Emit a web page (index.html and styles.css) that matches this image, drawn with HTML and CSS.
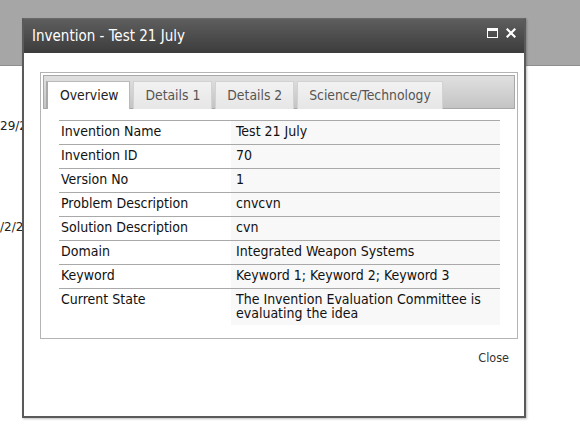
FILE: index.html
```html
<!DOCTYPE html>
<html>
<head>
<meta charset="utf-8">
<link rel="stylesheet" href="styles.css">
</head>
<body>
<div class="page">
  <div class="band"></div>
  <div class="bg-content">
    <div class="bg-date d1">29/2</div>
    <div class="bg-date d2">/2/2</div>
  </div>
  <div class="dialog">
    <div class="titlebar">
      <span class="title">Invention - Test 21 July</span>
      <span class="tools">
        <svg width="11" height="10" viewBox="0 0 11 10"><rect x="0.5" y="0.5" width="10" height="9" fill="none" stroke="#fff" stroke-width="1"/><rect x="1" y="1" width="9" height="2" fill="#fff"/></svg>
        <svg width="10" height="10" viewBox="0 0 10 10"><path d="M1.5 1.5 L8.5 8.5 M8.5 1.5 L1.5 8.5" stroke="#fff" stroke-width="2.2" stroke-linecap="square"/></svg>
      </span>
    </div>
    <div class="body">
      <div class="tabbox">
        <div class="tabstrip">
          <div class="tab active">Overview</div>
          <div class="tab">Details 1</div>
          <div class="tab">Details 2</div>
          <div class="tab">Science/Technology</div>
        </div>
        <table class="info">
          <tr><td class="lbl">Invention Name</td><td class="val">Test 21 July</td></tr>
          <tr><td class="lbl">Invention ID</td><td class="val">70</td></tr>
          <tr><td class="lbl">Version No</td><td class="val">1</td></tr>
          <tr><td class="lbl">Problem Description</td><td class="val">cnvcvn</td></tr>
          <tr><td class="lbl">Solution Description</td><td class="val">cvn</td></tr>
          <tr><td class="lbl">Domain</td><td class="val">Integrated Weapon Systems</td></tr>
          <tr><td class="lbl">Keyword</td><td class="val">Keyword 1; Keyword 2; Keyword 3</td></tr>
          <tr class="last"><td class="lbl">Current State</td><td class="val">The Invention Evaluation Committee is evaluating the idea</td></tr>
        </table>
      </div>
      <div class="footer"><a class="close">Close</a></div>
    </div>
  </div>
</div>
</body>
</html>
```
FILE: styles.css
```css
html, body { margin: 0; padding: 0; }
body {
  width: 580px; height: 447px; overflow: hidden;
  background: #fff;
  font-family: "DejaVu Sans", Verdana, sans-serif;
}
.page { position: relative; width: 580px; height: 447px; }
.band {
  height: 65px;
  background: #a6a6a6;
  border-bottom: 1px solid #8e8e8e;
}
.bg-content { position: relative; font-size: 12px; color: #222; }
.bg-date { position: absolute; left: 0; }
.d1 { top: 53px; }
.d2 { top: 154px; }
.dialog {
  position: absolute;
  left: 22px; top: 18px;
  width: 500px; height: 397px;
  border: 2px solid #5a5a5a;
  border-top: 1px solid #6a6a6a;
  background: #fff;
  box-shadow: 1px 1px 2px rgba(0,0,0,0.25);
}
.titlebar {
  height: 34px;
  background: linear-gradient(#5e5e5e, #3c3c3c);
  display: flex; align-items: flex-start; justify-content: space-between;
  padding: 0 8px 0 8px;
}
.title {
  color: #fff; font-size: 15px; margin-top: 8px;
  font-family: "DejaVu Sans Condensed", "DejaVu Sans", sans-serif;
}
.tools { display: flex; gap: 8px; margin-top: 9px; }
.body { padding: 19px 6px 0 16px; }
.tabbox {
  border: 1px solid #b4b4b4;
  height: 267px;
  padding: 2px 2px 0 2px;
  box-sizing: border-box;
}
.tabstrip {
  display: flex; gap: 3px;
  height: 34px; box-sizing: border-box;
  border: 1px solid #a8a8a8;
  background: linear-gradient(#e0e0e0, #c4c4c4);
  padding: 5px 0 0 2px;
}
.tab {
  height: 28px; box-sizing: border-box;
  padding: 5px 11px 0 11px;
  font-family: "DejaVu Sans Condensed", "DejaVu Sans", sans-serif;
  font-size: 13.8px; color: #555;
  background: linear-gradient(#f2f2f2, #e6e6e6);
  border: 1px solid #d2d2d2;
  border-bottom: none;
}
.tab.active {
  background: #fff; color: #222;
  border-color: #b9b9b9;
  border-left: 2px solid #aaa;
  padding-left: 12px;
}
.info {
  margin: 11px 0 0 16px;
  width: 441px;
  border-collapse: collapse;
  font-family: "DejaVu Sans Condensed", "DejaVu Sans", sans-serif;
  font-size: 14px; color: #111;
}
.info td {
  border-top: 1px solid #a9a9a9;
  height: 24px; padding: 0 2px; vertical-align: top;
  padding-top: 3px; line-height: 14px;
  box-sizing: border-box;
}
.info td.lbl { width: 172px; }
.info td.val { background: #f8f8f8; padding-left: 5px; }
.info tr.last td { height: 36px; }
.footer { display: flex; justify-content: flex-end; padding: 11px 9px 0 0; }
.close {
  font-family: "DejaVu Sans Condensed", "DejaVu Sans", sans-serif;
  font-size: 12.5px; color: #333;
}
```
